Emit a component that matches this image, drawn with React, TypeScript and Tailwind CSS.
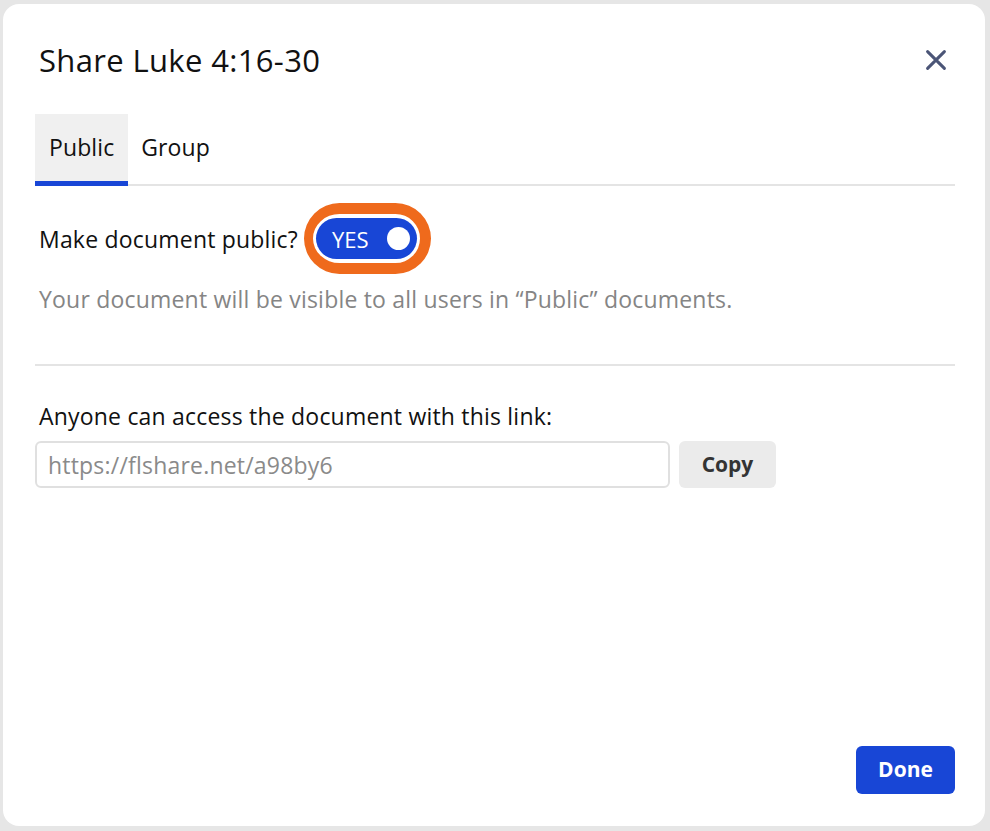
import React, { useState } from 'react';

const font = { fontFamily: '"Open Sans", "Noto Sans", sans-serif' };

const CloseIcon: React.FC = () => (
  <svg width="28" height="28" viewBox="0 0 24 24" fill="none" stroke="#4b5577" strokeWidth="2.6" strokeLinecap="round">
    <path d="M4.8 4.8l14.4 14.4M19.2 4.8L4.8 19.2" />
  </svg>
);

export default function App() {
  const [tab, setTab] = useState<'public' | 'group'>('public');
  const [isPublic, setIsPublic] = useState(true);

  return (
    <div className="w-[990px] h-[831px] bg-[#e6e6e6] pt-[4px] pl-[3px] pr-[5px] pb-[5px]" style={font}>
      <div className="h-full bg-white rounded-[16px] flex flex-col pl-[32px] pr-[30px] text-[#111]">
        {/* Header */}
        <div className="flex items-center justify-between pt-[36px]">
          <h1 className="text-[31px] leading-[40px] pl-[4px] tracking-[0.35px]">Share Luke 4:16-30</h1>
          <button className="mr-[5px] mt-[-1px]">
            <CloseIcon />
          </button>
        </div>

        {/* Tabs */}
        <div className="flex mt-[34px] border-b-2 border-[#e4e4e4]">
          <button
            onClick={() => setTab('public')}
            className={
              'h-[72px] -mb-[2px] px-[14px] text-[23px] tracking-[0.1px] border-b-[5px] ' +
              (tab === 'public' ? 'bg-[#f0f0f0] border-[#1846d6]' : 'border-transparent')
            }
          >
            Public
          </button>
          <button
            onClick={() => setTab('group')}
            className={
              'h-[72px] -mb-[2px] px-[13px] text-[23px] tracking-[0.1px] border-b-[5px] ' +
              (tab === 'group' ? 'bg-[#f0f0f0] border-[#1846d6]' : 'border-transparent')
            }
          >
            Group
          </button>
        </div>

        {/* Public toggle */}
        <div className="flex items-center mt-[17px] pl-[4px]">
          <span className="text-[23px] leading-[30px] tracking-[0.2px]">Make document public?</span>
          <div className="ml-[6px] rounded-full border-y-[11px] border-l-[9px] border-r-[11px] border-[#ef6a1c] px-[3px] py-[4px]">
            <button
              onClick={() => setIsPublic(!isPublic)}
              className="w-[101px] h-[41px] rounded-full bg-[#1846d6] flex items-center justify-between pl-[16px] pr-[7px]"
            >
              <span className="text-white text-[22px] leading-[30px]">YES</span>
              <span className="w-[23px] h-[23px] rounded-full bg-white" />
            </button>
          </div>
        </div>
        <p className="text-[23px] leading-[30px] tracking-[0.2px] text-[#858585] pl-[4px] mt-[10px]">
          Your document will be visible to all users in “Public” documents.
        </p>

        <div className="h-[2px] bg-[#e4e4e4] mt-[50px]" />

        {/* Link */}
        <p className="text-[23px] leading-[30px] tracking-[0.2px] pl-[4px] mt-[35px]">
          Anyone can access the document with this link:
        </p>
        <div className="flex mt-[10px] gap-[9px]">
          <input
            readOnly
            placeholder="https://flshare.net/a98by6"
            className="w-[635px] h-[47px] rounded-[6px] border-2 border-[#e0e0e0] px-[11px] text-[23px] tracking-[0.2px] placeholder:text-[#8a8a8a] outline-none"
          />
          <button className="w-[97px] h-[47px] rounded-[6px] bg-[#ebebeb] text-[21px] font-bold text-[#333]">
            Copy
          </button>
        </div>

        <div className="flex-1" />

        <div className="flex justify-end pb-[32px]">
          <button className="w-[99px] h-[48px] rounded-[6px] bg-[#1846d6] text-white text-[21px] font-bold">
            Done
          </button>
        </div>
      </div>
    </div>
  );
}
